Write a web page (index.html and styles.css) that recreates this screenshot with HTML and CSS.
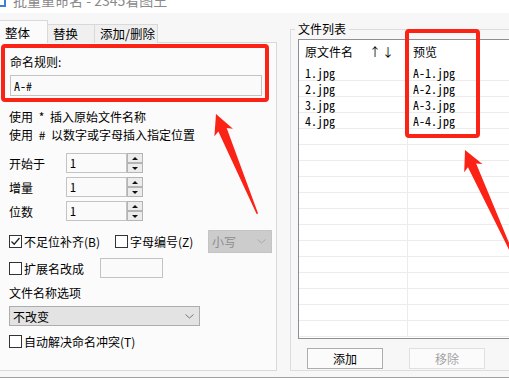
FILE: index.html
```html
<!DOCTYPE html>
<html lang="zh-CN">
<head>
	<meta charset="UTF-8">
	<title>批量重命名 - 2345看图王</title>
	<link rel="stylesheet" href="styles.css">
</head>
<body>
	<div class="titlebar">
		<span class="app-icon"></span>
		<span class="title">批量重命名 - 2345看图王</span>
	</div>
	<div class="main">
		<!-- 左侧：规则设置 -->
		<div class="left">
			<div class="tabs">
				<div class="tab active">整体</div>
				<div class="tab">替换</div>
				<div class="tab wide">添加/删除</div>
			</div>
			<div class="panel">
				<div class="rule-box">
					<div class="rule-label">命名规则:</div>
					<div class="field rule-input mono">A-#</div>
				</div>
				<div class="opts">
					<p class="hint first">使用 * 插入原始文件名称</p>
					<p class="hint">使用 # 以数字或字母插入指定位置</p>

					<div class="spin-row first">
						<span class="spin-label">开始于</span>
						<span class="field spin-field mono">1</span>
						<span class="spin-btns"><i class="up"></i><i class="down"></i></span>
					</div>
					<div class="spin-row">
						<span class="spin-label">增量</span>
						<span class="field spin-field mono">1</span>
						<span class="spin-btns"><i class="up"></i><i class="down"></i></span>
					</div>
					<div class="spin-row">
						<span class="spin-label">位数</span>
						<span class="field spin-field mono">1</span>
						<span class="spin-btns"><i class="up"></i><i class="down"></i></span>
					</div>

					<div class="check-row pad-row">
						<label class="check w-pad">
							<span class="box"><svg width="11" height="11" viewBox="0 0 11 11"><path d="M1.5 5.5 L4.2 8.2 L9.5 2" fill="none" stroke="#222" stroke-width="1.3"/></svg></span>
							不足位补齐(B)
						</label>
						<label class="check w-letter"><span class="box"></span>字母编号(Z)</label>
						<div class="select disabled small">
							<span>小写</span>
							<svg width="9" height="5" viewBox="0 0 9 5"><path d="M0.5 0.5 L4.5 4 L8.5 0.5" fill="none" stroke="#a8a8a8"/></svg>
						</div>
					</div>

					<div class="check-row ext-row">
						<label class="check w-ext"><span class="box"></span>扩展名改成</label>
						<span class="field ext-field"></span>
					</div>

					<div class="group-title">文件名称选项</div>
					<div class="select name-select">
						<span>不改变</span>
						<svg width="9" height="5" viewBox="0 0 9 5"><path d="M0.5 0.5 L4.5 4 L8.5 0.5" fill="none" stroke="#777"/></svg>
					</div>

					<div class="check-row auto-row">
						<label class="check"><span class="box"></span>自动解决命名冲突(T)</label>
					</div>
				</div>
			</div>
		</div>

		<!-- 右侧：文件列表 -->
		<div class="right">
			<fieldset class="files">
				<legend>文件列表</legend>
				<div class="listbox">
					<div class="list-head">
						<div class="col-name">原文件名<span class="sort">↑↓</span></div>
						<div class="col-preview">预览</div>
					</div>
					<div class="list-row"><div class="col-name mono">1.jpg</div><div class="col-preview mono">A-1.jpg</div></div>
					<div class="list-row"><div class="col-name mono">2.jpg</div><div class="col-preview mono">A-2.jpg</div></div>
					<div class="list-row"><div class="col-name mono">3.jpg</div><div class="col-preview mono">A-3.jpg</div></div>
					<div class="list-row"><div class="col-name mono">4.jpg</div><div class="col-preview mono">A-4.jpg</div></div>
					<div class="list-row"><div class="col-name"></div><div class="col-preview"></div></div>
					<div class="list-row"><div class="col-name"></div><div class="col-preview"></div></div>
					<div class="list-row"><div class="col-name"></div><div class="col-preview"></div></div>
					<div class="list-row"><div class="col-name"></div><div class="col-preview"></div></div>
					<div class="list-row"><div class="col-name"></div><div class="col-preview"></div></div>
					<div class="list-row"><div class="col-name"></div><div class="col-preview"></div></div>
					<div class="list-row"><div class="col-name"></div><div class="col-preview"></div></div>
					<div class="list-row"><div class="col-name"></div><div class="col-preview"></div></div>
					<div class="list-row"><div class="col-name"></div><div class="col-preview"></div></div>
					<div class="list-row"><div class="col-name"></div><div class="col-preview"></div></div>
					<div class="list-row"><div class="col-name"></div><div class="col-preview"></div></div>
					<div class="list-row"><div class="col-name"></div><div class="col-preview"></div></div>
					<div class="list-row"><div class="col-name"></div><div class="col-preview"></div></div>
				</div>
				<div class="file-btns">
					<button type="button" class="btn">添加</button>
					<button type="button" class="btn" disabled>移除</button>
				</div>
			</fieldset>
		</div>
	</div>
	<div class="bottom-line"></div>

	<!-- 标注 -->
	<div class="mark preview-mark"></div>
	<svg class="arrows" width="509" height="381" viewBox="0 0 509 381">
		<g transform="translate(216 114) rotate(67.5)" fill="#fa2315">
			<polygon points="0,0 20,-10 17,-4.5 108,-0.8 108,0.8 17,4.5 20,10"/>
		</g>
		<g transform="translate(465 150) rotate(65.5)" fill="#fa2315">
			<polygon points="0,0 20,-10 17,-4.5 125,-0.8 125,0.8 17,4.5 20,10"/>
		</g>
	</svg>
</body>
</html>
```

FILE: styles.css
```css
* {
	box-sizing: border-box;
}
body {
	margin: 0;
	width: 509px;
	height: 381px;
	overflow: hidden;
	position: relative;
	background: #fff;
	font-family: "Noto Sans CJK SC", sans-serif;
	font-size: 12px;
	color: #000;
}
.mono {
	font-family: "Noto Sans Mono CJK SC", "Liberation Mono", monospace;
}
p {
	margin: 0;
}

/* 标题栏 */
.titlebar {
	height: 13px;
	overflow: hidden;
	display: flex;
	background: #fff;
}
.app-icon {
	width: 6px;
	height: 7px;
	border: 2px solid #3d7fd6;
	border-top: none;
	border-left: none;
}
.title {
	margin: -7px 0 0 7px;
	font-size: 14px;
	line-height: 14px;
	color: #8a8a8a;
}

.main {
	display: flex;
	height: 364px;
	background: #f7f7f7;
}
.bottom-line {
	border-top: 1px solid #a0a0a0;
	height: 4px;
	background: #fff;
}

/* 左侧 */
.left {
	width: 277px;
	flex: none;
}
.tabs {
	display: flex;
	align-items: flex-end;
	padding-top: 7px;
	height: 30px;
	margin-bottom: -1px;
	position: relative;
	z-index: 1;
}
.tab {
	width: 48px;
	height: 19px;
	padding-left: 5px;
	line-height: 18px;
	font-size: 12.5px;
	border: 1px solid #d9d9d9;
	border-bottom: none;
	background: #f0f0f0;
	margin-left: -1px;
}
.tab.active {
	margin-left: 0;
	height: 23px;
	line-height: 23px;
	background: #fbfbfb;
	border-left: none;
}
.tab.wide {
	width: 64px;
}
.panel {
	height: 329px;
	border: 1px solid #d9d9d9;
	border-left: none;
	background: #fbfbfb;
}
.rule-box {
	width: 268px;
	margin: 1px 0 0 1px;
	border: 4px solid #fa2315;
	border-radius: 4px;
	padding: 7px 3px 2px 5px;
}
.rule-label {
	line-height: 14px;
}
.field {
	display: block;
	height: 20px;
	border: 1px solid #c3c3c3;
	background: #fafafa;
	padding: 0 3px;
	line-height: 18px;
}
.rule-input {
	margin-top: 6px;
	height: 21px;
	line-height: 19px;
	width: 252px;
}
.opts {
	padding-left: 9px;
}
.hint {
	line-height: 18px;
	word-spacing: 3px;
}
.hint.first {
	margin-top: 6px;
}
.spin-row {
	display: flex;
	align-items: center;
	height: 20px;
	margin-top: 4px;
}
.spin-row.first {
	margin-top: 9px;
}
.spin-label {
	width: 57px;
}
.spin-field {
	width: 61px;
}
.spin-btns {
	display: flex;
	flex-direction: column;
	width: 16px;
	height: 20px;
}
.spin-btns i {
	height: 10px;
	border: 1px solid #b4b4b4;
	background: #ececec;
	display: flex;
	align-items: center;
	justify-content: center;
}
.spin-btns i::before {
	content: "";
	border-left: 3px solid transparent;
	border-right: 3px solid transparent;
	border-bottom: 3px solid #111;
}
.spin-btns i.down::before {
	border-bottom: none;
	border-top: 3px solid #111;
}
.check-row {
	display: flex;
	align-items: center;
}
.check {
	display: flex;
	align-items: center;
	flex: none;
}
.box {
	width: 13px;
	height: 13px;
	border: 1px solid #333;
	background: #fff;
	margin-right: 2px;
	display: flex;
	align-items: center;
	justify-content: center;
}
.pad-row {
	height: 23px;
	margin-top: 9px;
}
.w-pad {
	width: 106px;
}
.w-letter {
	width: 93px;
}
.select {
	display: flex;
	align-items: center;
	justify-content: space-between;
	border: 1px solid #adadad;
	background: #e3e3e3;
	padding: 0 5px 0 3px;
}
.select.small {
	width: 64px;
	height: 23px;
}
.select.disabled {
	background: #cccccc;
	border-color: #c4c4c4;
	color: #8c8c8c;
}
.ext-row {
	height: 20px;
	margin-top: 5px;
}
.w-ext {
	width: 91px;
}
.ext-field {
	width: 63px;
}
.group-title {
	margin-top: 6px;
	line-height: 18px;
}
.name-select {
	margin-top: 4px;
	width: 191px;
	height: 20px;
}
.auto-row {
	margin-top: 8px;
	height: 14px;
}

/* 右侧 */
.right {
	flex: 1;
	min-width: 0;
	padding: 9px 0 0 13px;
}
.files {
	margin: 0;
	padding: 0;
	height: 349px;
	min-width: 0;
	border: 1px solid #dcdcdc;
	border-right: none;
}
.files legend {
	margin-left: 4px;
	padding: 0 3px;
	line-height: 14px;
}
.listbox {
	margin: 3px 0 0 7px;
	width: 230px;
	height: 300px;
	overflow: hidden;
	border: 1px solid #8e8f95;
	border-right: none;
	background: #fff;
}
.list-head,
.list-row {
	display: flex;
}
.list-head {
	height: 25px;
	line-height: 24px;
}
.list-row {
	height: 16px;
	line-height: 15px;
	border-bottom: 1px solid #ececec;
}
.col-name {
	width: 109px;
	padding-left: 6px;
	display: flex;
	justify-content: space-between;
	padding-right: 13px;
}
.list-row .col-name {
	border-right: 1px solid #ececec;
}
.col-preview {
	padding-left: 5px;
}
.sort {
	letter-spacing: 1px;
}
.file-btns {
	display: flex;
	gap: 26px;
	margin: 9px 0 0 16px;
}
.btn {
	width: 76px;
	height: 21px;
	padding: 0;
	border: 1px solid #adadad;
	background: #fbfbfb;
	font-family: inherit;
	font-size: 12px;
	color: #000;
}
.btn:disabled {
	border-color: #e0e0e0;
	color: #a3a3a3;
}

/* 标注层 */
.mark {
	position: absolute;
	left: 405px;
	top: 29px;
	width: 75px;
	height: 109px;
	border: 4px solid #fa2315;
	border-radius: 4px;
}
.arrows {
	position: absolute;
	left: 0;
	top: 0;
	pointer-events: none;
}
```
